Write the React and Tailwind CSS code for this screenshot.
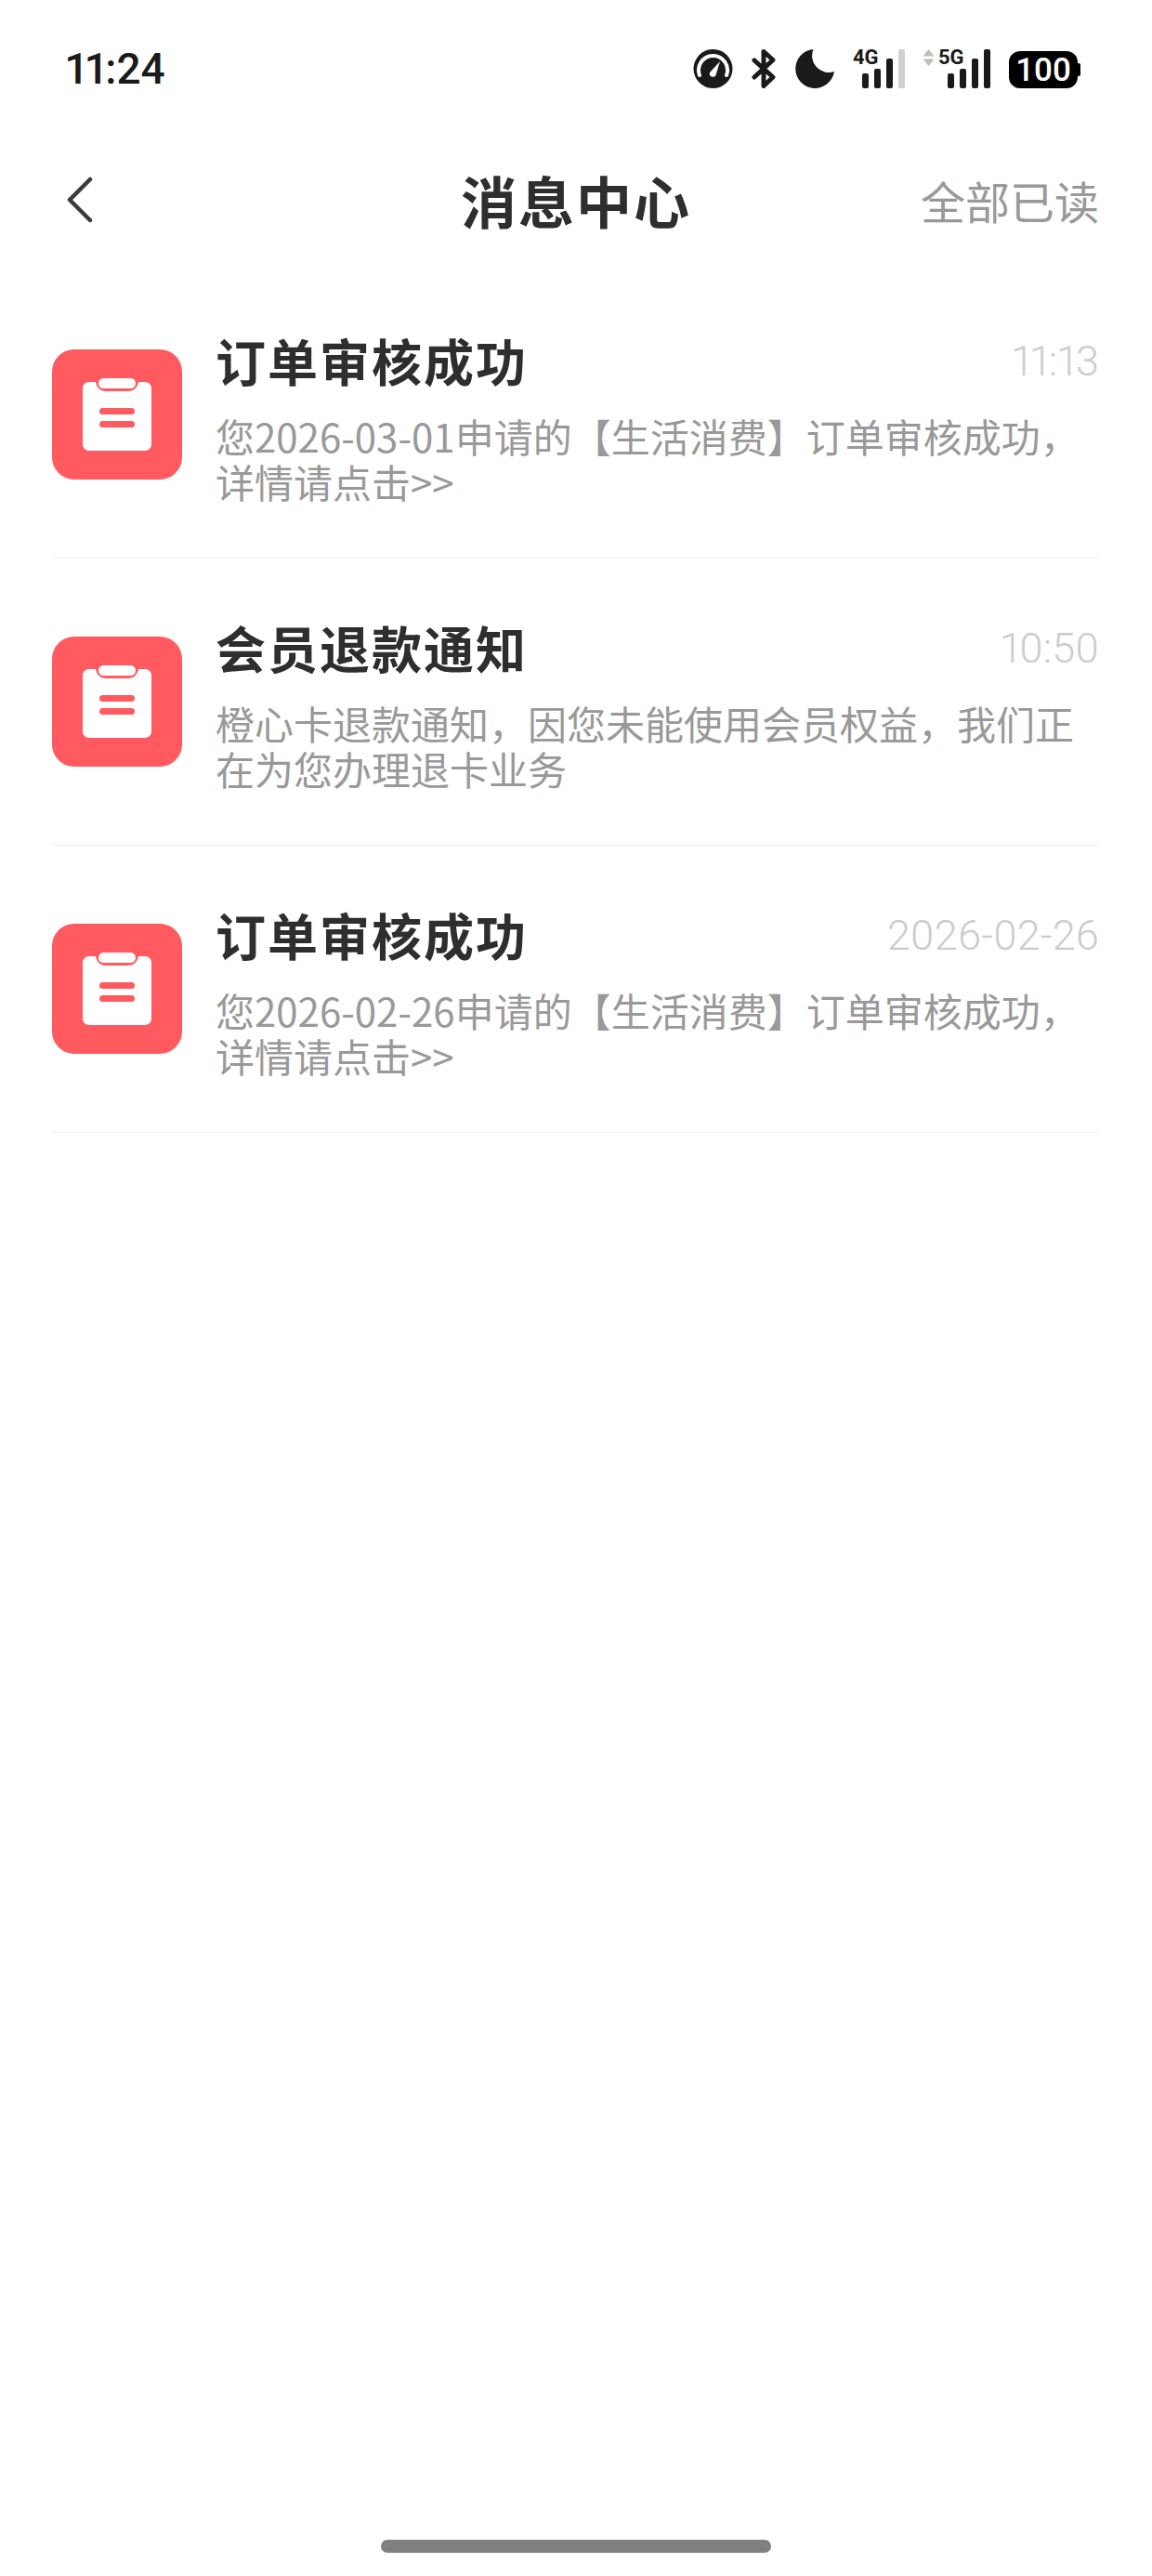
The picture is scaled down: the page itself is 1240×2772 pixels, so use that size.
import React from "react";

const sans = "font-['Noto_Sans_CJK_SC','Noto_Sans',sans-serif]";

const messages = [
  {
    title: "订单审核成功",
    time: "11:13",
    body: "您2026-03-01申请的【生活消费】订单审核成功，详情请点击>>",
  },
  {
    title: "会员退款通知",
    time: "10:50",
    body: "橙心卡退款通知，因您未能使用会员权益，我们正在为您办理退卡业务",
  },
  {
    title: "订单审核成功",
    time: "2026-02-26",
    body: "您2026-02-26申请的【生活消费】订单审核成功，详情请点击>>",
  },
];

function ClipboardIcon() {
  return (
    <div className="flex h-[140px] w-[140px] shrink-0 items-center justify-center rounded-[24px] bg-[#ff5a5f]">
      <svg width="74" height="78" viewBox="0 0 74 78">
        <path
          d="M7 4h7c1 6 5 10 11 10h24c6 0 10-4 11-10h7c4 0 7 3 7 7v60c0 4-3 7-7 7H7c-4 0-7-3-7-7V11c0-4 3-7 7-7z"
          fill="#fff"
        />
        <rect x="17" y="0" width="40" height="11" rx="5.5" fill="#fff" />
        <rect x="18" y="32" width="38" height="7" rx="3.5" fill="#ff5a5f" />
        <rect x="18" y="46" width="38" height="7" rx="3.5" fill="#ff5a5f" />
      </svg>
    </div>
  );
}

function Signal({ label, dim, arrows }) {
  return (
    <div className="flex items-start gap-[4px]">
      {arrows && (
        <svg width="13" height="18" viewBox="0 0 13 18">
          <path d="M6.500 0l6 7.500H.5zM6.500 18l6-7.500H.5z" fill="#bdbdbd" />
        </svg>
      )}
      <div className="relative h-[42px] w-[56px]">
        <span className="absolute top-0 left-0 text-[22px] leading-[18px] font-bold text-[#1a1a1a] font-['Roboto',sans-serif]">
          {label}
        </span>
        <div className="absolute right-0 bottom-0 flex items-end gap-[6px]">
          <div className="h-[16px] w-[7px] rounded-[2px] bg-[#1a1a1a]" />
          <div className="h-[21px] w-[7px] rounded-[2px] bg-[#1a1a1a]" />
          <div className="h-[32px] w-[7px] rounded-[2px] bg-[#1a1a1a]" />
          <div className={dim ? "h-[42px] w-[7px] rounded-[2px] bg-[#d0d0d0]" : "h-[42px] w-[7px] rounded-[2px] bg-[#1a1a1a]"} />
        </div>
      </div>
    </div>
  );
}

function StatusIcons() {
  return (
    <div className="flex h-[42px] items-end gap-[20px]">
      <svg width="43" height="42" viewBox="0 0 43 42">
        <circle cx="21.5" cy="21" r="21" fill="#1a1a1a" />
        <path d="M7 28a15.5 15.5 0 1 1 29 0" fill="none" stroke="#fff" strokeWidth="4" strokeLinecap="round" />
        <path d="M29 13l-4.5 15a3.6 3.6 0 0 1-6.5-3z" fill="#fff" />
      </svg>
      <svg width="26" height="42" viewBox="0 0 26 42">
        <path d="M3 12l20 18-10 9.500V2.500l10 9L3 30" fill="none" stroke="#1a1a1a" strokeWidth="5" strokeLinecap="round" strokeLinejoin="round" />
      </svg>
      <svg width="43" height="42" viewBox="0 0 43 42">
        <path d="M20.500 0A21 21 0 1 0 43 24 18 18 0 0 1 20.500 0z" fill="#1a1a1a" />
      </svg>
      <div className="flex items-end gap-[19px]">
        <Signal label="4G" dim />
        <Signal label="5G" arrows />
      </div>
      <div className="flex items-center">
        <div className="flex h-[40px] w-[74px] items-center justify-center rounded-[12px] bg-black">
          <span className="text-[35px] leading-none font-medium text-white font-['Roboto',sans-serif]">100</span>
        </div>
        <div className="h-[14px] w-[3px] rounded-r-[2px] bg-black" />
      </div>
    </div>
  );
}

function MessageRow({ msg }) {
  return (
    <div className="flex h-[309px] items-center gap-[36px] border-b border-[#f0f0f0]">
      <ClipboardIcon />
      <div className="min-w-0 flex-1 pt-[1px]">
        <div className="flex items-center justify-between">
          <span className="text-[54px] leading-[70px] font-bold tracking-[2px] text-[#2e2e2e]">{msg.title}</span>
          <span className="pt-[2px] text-[45px] leading-[70px] font-light text-[#cccccc] proportional-nums font-['Roboto',sans-serif]">{msg.time}</span>
        </div>
        <p className="mt-[20px] text-[42px] leading-[49px] text-[#999999]">{msg.body}</p>
      </div>
    </div>
  );
}

export default function App() {
  return (
    <div className={`${sans} flex min-h-[2772px] w-[1240px] flex-col bg-white`}>
      <div className="flex h-[42px] mt-[53px] items-center justify-between pr-[77px] pl-[71px]">
        <span className="text-[46px] leading-[42px] font-medium text-[#1a1a1a] proportional-nums font-['Roboto',sans-serif]">11:24</span>
        <StatusIcons />
      </div>

      <div className="mt-[80px] grid grid-cols-[1fr_auto_1fr] items-center px-[57px]">
        <svg className="ml-[15px]" width="28" height="50" viewBox="0 0 28 50">
          <path d="M25 3L3 25l22 22" fill="none" stroke="#3a3a3a" strokeWidth="4.500" strokeLinecap="round" strokeLinejoin="round" />
        </svg>
        <span className="text-[60px] leading-[80px] font-bold tracking-[2px] text-[#2e2e2e]">消息中心</span>
        <span className="text-right text-[48px] leading-[80px] text-[#999999]">全部已读</span>
      </div>

      <div className="mt-[37px] pr-[57px] pl-[56px]">
        {messages.map((m, i) => (
          <MessageRow key={i} msg={m} />
        ))}
      </div>

      <div className="mt-auto mb-[25px] flex justify-center">
        <div className="h-[14px] w-[420px] rounded-full bg-[#808080]" />
      </div>
    </div>
  );
}
